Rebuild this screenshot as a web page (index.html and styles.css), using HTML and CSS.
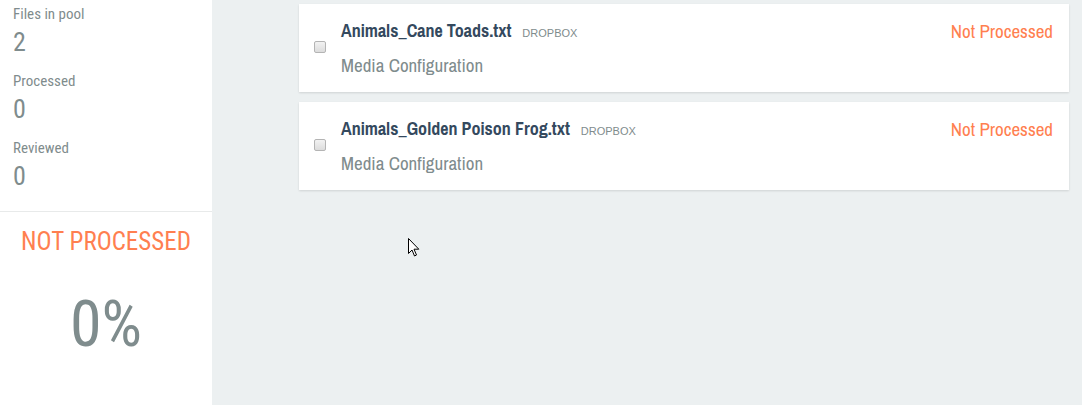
FILE: index.html
```html
<!DOCTYPE html>
<html>
<head>
<meta charset="utf-8">
<link rel="stylesheet" href="styles.css">
</head>
<body>
<div class="page">
  <aside class="sidebar">
    <div class="stats">
      <div class="stat">
        <div class="stat-label">Files in pool</div>
        <div class="stat-value">2</div>
      </div>
      <div class="stat">
        <div class="stat-label">Processed</div>
        <div class="stat-value">0</div>
      </div>
      <div class="stat">
        <div class="stat-label">Reviewed</div>
        <div class="stat-value">0</div>
      </div>
    </div>
    <div class="status">
      <div class="status-title">NOT PROCESSED</div>
      <div class="status-pct">0%</div>
    </div>
  </aside>
  <main class="main">
    <div class="card">
      <input type="checkbox" class="check">
      <div class="card-body">
        <div class="card-title"><span class="name">Animals_Cane Toads.txt</span><span class="source">DROPBOX</span></div>
        <div class="card-sub">Media Configuration</div>
      </div>
      <div class="card-status">Not Processed</div>
    </div>
    <div class="card">
      <input type="checkbox" class="check">
      <div class="card-body">
        <div class="card-title"><span class="name">Animals_Golden Poison Frog.txt</span><span class="source">DROPBOX</span></div>
        <div class="card-sub">Media Configuration</div>
      </div>
      <div class="card-status">Not Processed</div>
    </div>
  </main>
  <svg class="cursor" width="12" height="19" viewBox="0 0 12 19"><path d="M0.5 0.5 L0.5 15.5 L4 12 L6.5 18 L8.5 17 L6 11.2 L10.8 11.2 Z" fill="#fff" stroke="#000" stroke-width="1"/></svg>
</div>
</body>
</html>
```

FILE: styles.css
```css
html, body {
  margin: 0;
  padding: 0;
  background: #ecf0f1;
}
.page {
  display: flex;
  height: 405px;
  position: relative;
}
.sidebar {
  width: 212px;
  background: #fff;
  flex: none;
  font-family: "Roboto Condensed", "Roboto", sans-serif;
}
.stats {
  padding: 4px 13px 0;
  border-bottom: 1px solid #e8eaea;
  height: 212px;
  box-sizing: border-box;
}
.stat {
  height: 67px;
}
.stat-label {
  font-size: 15px;
  color: #7f8c8d;
  line-height: 20px;
}
.stat-value {
  font-size: 26px;
  color: #7f8c8d;
  line-height: 30px;
  margin-top: 3px;
}
.status {
  text-align: center;
}
.status-title {
  font-size: 25px;
  color: #ff7f50;
  margin-top: 15px;
  line-height: 30px;
}
.status-pct {
  font-size: 64px;
  color: #7f8c8d;
  margin-top: 32px;
  line-height: 72px;
}
.main {
  flex: 1;
  padding: 4px 13px 0 87px;
  display: flex;
  flex-direction: column;
  gap: 10px;
  font-family: "Archivo Narrow", "Roboto Condensed", sans-serif;
}
.card {
  background: #fff;
  height: 88px;
  box-shadow: 0 1px 2px rgba(0,0,0,0.12);
  display: flex;
  align-items: flex-start;
}
.check {
  appearance: none;
  -webkit-appearance: none;
  margin: 37px 0 0 15px;
  width: 12px;
  height: 12px;
  box-sizing: border-box;
  border: 1px solid #b4b4b4;
  border-radius: 2px;
  background: linear-gradient(#f2f2f2, #dcdcdc);
  flex: none;
}
.card-body {
  flex: 1;
  margin-left: 15px;
  padding-top: 16px;
}
.card-title {
  line-height: 22px;
}
.name {
  font-weight: bold;
  font-size: 18px;
  color: #34495e;
}
.source {
  font-family: "Liberation Sans", Arial, sans-serif;
  font-size: 11px;
  color: #7f8c8d;
  margin-left: 11px;
}
.card-sub {
  font-size: 19px;
  color: #7f8c8d;
  margin-top: 10px;
  line-height: 22px;
}
.card-status {
  font-size: 19px;
  color: #ff7f50;
  padding: 16px 16px 0 0;
  line-height: 22px;
}
.cursor {
  position: absolute;
  left: 408px;
  top: 238px;
}
```
